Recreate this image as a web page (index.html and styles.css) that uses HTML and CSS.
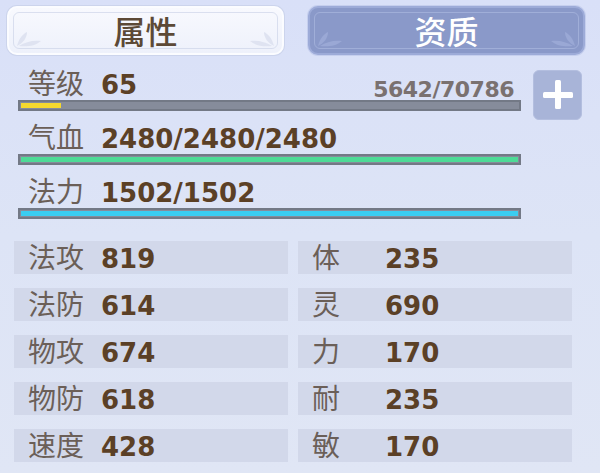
FILE: index.html
```html
<!DOCTYPE html>
<html lang="zh">
<head>
<meta charset="utf-8">
<title>属性</title>
<link rel="stylesheet" href="styles.css">
</head>
<body>
<div class="panel">
  <div class="tabs">
    <div class="tab tab-on">
      <svg class="leaf leaf-l" viewBox="0 0 30 20"><path d="M2 18 C4 10 8 6 12 4 C12 10 8 15 2 18 Z"/><path d="M4 18 C10 14 18 12 26 13 C20 18 12 19 4 18 Z"/></svg>
      <span class="tab-text">属性</span>
      <svg class="leaf leaf-r" viewBox="0 0 30 20"><path d="M28 18 C26 10 22 6 18 4 C18 10 22 15 28 18 Z"/><path d="M26 18 C20 14 12 12 4 13 C10 18 18 19 26 18 Z"/></svg>
    </div>
    <div class="tab tab-off">
      <svg class="leaf leaf-l" viewBox="0 0 30 20"><path d="M2 18 C4 10 8 6 12 4 C12 10 8 15 2 18 Z"/><path d="M4 18 C10 14 18 12 26 13 C20 18 12 19 4 18 Z"/></svg>
      <span class="tab-text">资质</span>
      <svg class="leaf leaf-r" viewBox="0 0 30 20"><path d="M28 18 C26 10 22 6 18 4 C18 10 22 15 28 18 Z"/><path d="M26 18 C20 14 12 12 4 13 C10 18 18 19 26 18 Z"/></svg>
    </div>
  </div>

  <div class="meters-area">
    <div class="meters">
      <div class="meter">
        <div class="head"><span class="lbl">等级</span><span class="val">65</span><span class="exp">5642/70786</span></div>
        <div class="bar"><div class="fill fill-exp" style="width:8%"></div></div>
      </div>
      <div class="meter">
        <div class="head"><span class="lbl">气血</span><span class="val">2480/2480/2480</span></div>
        <div class="bar"><div class="fill fill-hp" style="width:100%"></div></div>
      </div>
      <div class="meter">
        <div class="head"><span class="lbl">法力</span><span class="val">1502/1502</span></div>
        <div class="bar"><div class="fill fill-mp" style="width:100%"></div></div>
      </div>
    </div>
    <div class="plus">
      <svg viewBox="0 0 30 30" width="30" height="30"><rect x="0" y="12" width="30" height="6" rx="1.5"/><rect x="12" y="0" width="6" height="29" rx="1.5"/></svg>
    </div>
  </div>

  <div class="stats">
    <div class="cell"><span class="lbl">法攻</span><span class="val">819</span></div>
    <div class="cell"><span class="lbl">体</span><span class="val">235</span></div>
    <div class="cell"><span class="lbl">法防</span><span class="val">614</span></div>
    <div class="cell"><span class="lbl">灵</span><span class="val">690</span></div>
    <div class="cell"><span class="lbl">物攻</span><span class="val">674</span></div>
    <div class="cell"><span class="lbl">力</span><span class="val">170</span></div>
    <div class="cell"><span class="lbl">物防</span><span class="val">618</span></div>
    <div class="cell"><span class="lbl">耐</span><span class="val">235</span></div>
    <div class="cell"><span class="lbl">速度</span><span class="val">428</span></div>
    <div class="cell"><span class="lbl">敏</span><span class="val">170</span></div>
  </div>
</div>
</body>
</html>
```

FILE: styles.css
```css
html, body {
  margin: 0;
  padding: 0;
}
body {
  width: 600px;
  height: 473px;
  overflow: hidden;
  background: linear-gradient(180deg, #d9e0f8 0%, #dde4f6 50%, #e0e6f5 100%);
  font-family: "Noto Sans CJK SC", "Noto Sans", sans-serif;
}
.panel {
  display: flex;
  flex-direction: column;
}

/* Tabs */
.tabs {
  display: flex;
  gap: 24px;
  padding: 6px 0 0 7px;
}
.tab {
  position: relative;
  box-sizing: border-box;
  width: 277px;
  height: 49px;
  border-radius: 10px;
  display: flex;
  align-items: center;
  justify-content: center;
}
.tab::after {
  content: "";
  position: absolute;
  inset: 4px;
  border-radius: 6px;
  border: 1px solid transparent;
}
.tab-on {
  background: linear-gradient(180deg, #f8f9fe 0%, #eef1fb 100%);
  border: 2px solid #fbfcff;
  box-shadow: 0 0 0 1px #ccd4ec;
}
.tab-on::after {
  border-color: rgba(205, 212, 232, 0.7);
}
.tab-off {
  background: #8a99c9;
  border: 2px solid #9dabd8;
  box-shadow: 0 0 0 1px #c6cfee;
}
.tab-off::after {
  border-color: rgba(170, 182, 222, 0.7);
}
.tab-text {
  font-size: 32px;
  font-weight: 500;
  line-height: 36px;
  margin-top: -2px;
}
.tab-on .tab-text { color: #5c4936; }
.tab-off .tab-text { color: #ffffff; }
.leaf {
  position: absolute;
  bottom: 5px;
  width: 30px;
  height: 20px;
}
.leaf-l { left: 6px; }
.leaf-r { right: 6px; }
.tab-on .leaf path { fill: #dfe3f1; }
.tab-off .leaf path { fill: #9aa8d5; }

/* Meters */
.meters-area {
  display: flex;
  align-items: flex-start;
  padding-left: 18px;
  margin-top: 13px;
}
.meters {
  width: 503px;
  display: flex;
  flex-direction: column;
  gap: 11px;
}
.meter {
  display: flex;
  flex-direction: column;
}
.head {
  display: flex;
  align-items: baseline;
  height: 28px;
  padding-left: 10px;
  padding-right: 7px;
}
.lbl {
  font-family: "Noto Sans CJK SC", sans-serif;
  font-size: 28px;
  line-height: 28px;
  color: #6b5f58;
  min-width: 73px;
}
.val {
  font-family: "DejaVu Sans", "Noto Sans", sans-serif;
  font-weight: 700;
  font-size: 26px;
  line-height: 28px;
  color: #5b4026;
}
.exp {
  margin-left: auto;
  font-family: "DejaVu Sans", sans-serif;
  font-weight: 700;
  font-size: 22px;
  line-height: 20px;
  letter-spacing: -0.5px;
  color: #7a7170;
  align-self: flex-end;
  margin-bottom: -4px;
}
.bar {
  box-sizing: border-box;
  height: 11px;
  margin-top: 4px;
  border: 2px solid #737986;
  padding: 1px;
  background: #868c9b;
}
.fill {
  height: 100%;
}
.fill-exp { background: #f6d92e; }
.fill-hp { background: #4edb97; }
.fill-mp { background: #3acdf1; }

.plus {
  box-sizing: border-box;
  width: 49px;
  height: 50px;
  margin-left: 12px;
  margin-top: 2px;
  border-radius: 6px;
  background: #a8b4d8;
  border: 1px solid #b3bedf;
  display: flex;
  align-items: center;
  justify-content: center;
}
.plus svg rect { fill: #ffffff; }

/* Stats */
.stats {
  display: grid;
  grid-template-columns: 274px 274px;
  grid-auto-rows: 33px;
  column-gap: 10px;
  row-gap: 14px;
  margin: 22px 0 0 14px;
}
.cell {
  background: #d2d8ea;
  display: flex;
  align-items: baseline;
  padding-left: 14px;
  padding-top: 1px;
}
```
